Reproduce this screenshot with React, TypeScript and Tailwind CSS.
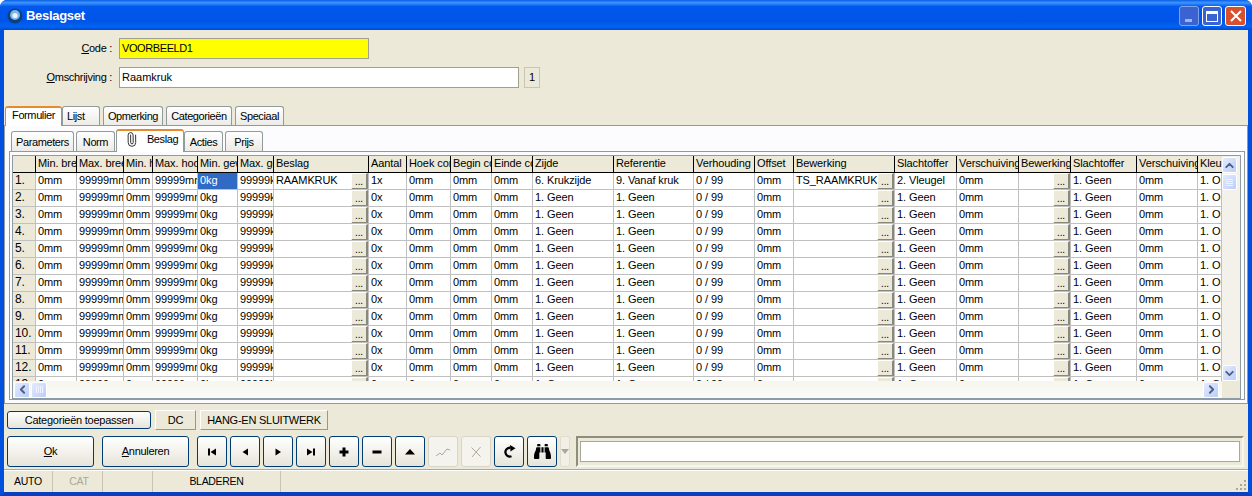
import React from "react";
import { ChevronDown, ChevronLeft, ChevronRight, ChevronUp, Paperclip } from "lucide-react";
import { FaBinoculars } from "react-icons/fa";

const GRID = "grid grid-cols-[23px_41px_47px_29px_45px_40px_36px_95px_38px_44px_41px_41px_81px_80px_61px_39px_101px_62px_62px_52px_66px_61px_24px]";

const headers = ["", "Min. breedte", "Max. breedte", "Min. hoogte", "Max. hoogte", "Min. gewicht", "Max. gewicht", "Beslag", "Aantal", "Hoek correctie", "Begin correctie", "Einde correctie", "Zijde", "Referentie", "Verhouding", "Offset", "Bewerking", "Slachtoffer", "Verschuiving", "Bewerking", "Slachtoffer", "Verschuiving", "Kleur"];

function rowData(n: number): string[] {
  const first = n === 1;
  return [
    `${n}.`, "0mm", "99999mm", "0mm", "99999mm", "0kg", "99999kg",
    first ? "RAAMKRUK" : "", first ? "1x" : "0x", "0mm", "0mm", "0mm",
    first ? "6. Krukzijde" : "1. Geen", first ? "9. Vanaf kruk" : "1. Geen",
    "0 / 99", "0mm", first ? "TS_RAAMKRUK" : "", first ? "2. Vleugel" : "1. Geen",
    "0mm", "", "1. Geen", "0mm", "1. Onbekend",
  ];
}

const rows = Array.from({ length: 13 }, (_, i) => rowData(i + 1));

function Ellipsis() {
  return (
    <span className="absolute right-0 top-0 flex h-[17px] w-[17px] items-end justify-center border-t border-l border-t-white border-l-white border-r-2 border-b-2 border-r-[#8a8878] border-b-[#8a8878] bg-[#ece9d8] pb-[1px] text-[10px] leading-[10px]">
      ...
    </span>
  );
}

function SbBtn({ children, className = "" }: { children: React.ReactNode; className?: string }) {
  return (
    <div className={`flex h-[16px] w-[15px] shrink-0 items-center justify-center rounded-[2px] border border-white bg-linear-to-br from-[#e3ebfe] to-[#bccdf8] text-[#4d6185] ${className}`}>
      {children}
    </div>
  );
}

function Tab({ label, w, active, ml = "", h = "h-[19px]" }: { label: React.ReactNode; w: string; active?: boolean; ml?: string; h?: string }) {
  return active ? (
    <div className={`relative z-10 -mb-px flex ${w} ${ml} h-[20px] items-center justify-center rounded-t-[3px] border-x border-t-2 border-x-[#919b9c] border-t-[#e68b2c] bg-white pb-[3px]`}>
      {label}
    </div>
  ) : (
    <div className={`flex ${w} ${ml} ${h} items-center justify-center rounded-t-[3px] border-x border-t border-[#919b9c] bg-linear-to-b from-white to-[#ecebe6]`}>
      {label}
    </div>
  );
}

function NavBtn({ children, disabled }: { children: React.ReactNode; disabled?: boolean }) {
  return (
    <div className={disabled
      ? "flex h-[31px] w-[30px] items-center justify-center rounded-[3px] border border-[#d8d5c7] bg-[#f4f3ee] text-[#aca899]"
      : "flex h-[31px] w-[30px] items-center justify-center rounded-[3px] border border-[#003c74] bg-linear-to-b from-white to-[#e6e4d9] text-black"}>
      {children}
    </div>
  );
}

function Ico({ d }: { d: string }) {
  return (
    <svg width="12" height="12" viewBox="0 0 12 12"><path d={d} fill="currentColor" /></svg>
  );
}

export default function App() {
  return (
    <div className="flex h-[496px] w-[1252px] flex-col overflow-hidden rounded-t-[7px] bg-[#0048d8] font-['Liberation_Sans',Arial,sans-serif] text-[11px] text-black">
      {/* Title bar */}
      <div className="flex h-[30px] shrink-0 items-center bg-[linear-gradient(180deg,#0a5fe6_0%,#3d95ff_9%,#0058ee_22%,#0054e6_70%,#0064f2_88%,#0048d0_100%)] pl-[7px] pr-[6px] pt-[2px]">
        <svg width="16" height="16" viewBox="0 0 16 16">
          <circle cx="8" cy="8" r="7.5" fill="#0d3f7c" />
          <circle cx="8" cy="7" r="5" fill="#7fb6e8" />
          <circle cx="8" cy="7.5" r="2.6" fill="#eaf4ff" />
        </svg>
        <span className="ml-[3px] text-[13px] font-bold tracking-[-0.3px] text-white">Beslagset</span>
        <div className="ml-auto flex gap-[3px]">
          <div className="flex h-[20px] w-[20px] items-end rounded-[3px] border border-[#7fa4ec] bg-[#3a62d0] pb-[3px] pl-[5px]">
            <div className="h-[3px] w-[7px] bg-[#9db5ea]" />
          </div>
          <div className="flex h-[20px] w-[20px] items-center justify-center rounded-[3px] border border-white bg-[#3a62d0]">
            <div className="h-[11px] w-[12px] border border-t-[3px] border-white" />
          </div>
          <div className="flex h-[20px] w-[21px] items-center justify-center rounded-[3px] border border-white bg-[#d9502c]">
            <svg width="12" height="12" viewBox="0 0 12 12"><path d="M1 1L11 11M11 1L1 11" stroke="white" strokeWidth="2" /></svg>
          </div>
        </div>
      </div>

      {/* Body */}
      <div className="flex min-h-0 flex-1 flex-col border-x-4 border-b-4 border-x-[#0050e0] border-b-[#0a3fc0] bg-[#ece9d8]">
        {/* Form */}
        <div className="mt-[8px] flex h-[21px] items-center">
          <label className="w-[108px] text-right tracking-[-0.3px]"><span className="underline">C</span>ode :</label>
          <div className="ml-[7px] flex h-[21px] w-[250px] items-center border border-[#a0a090] bg-[#ffff00] pl-[2px] tracking-[-0.4px]">VOORBEELD1</div>
        </div>
        <div className="mt-[8px] flex h-[21px] items-center">
          <label className="w-[108px] text-right tracking-[-0.3px]"><span className="underline">O</span>mschrijving :</label>
          <div className="ml-[7px] flex h-[21px] w-[400px] items-center border border-[#a0a090] bg-white pl-[2px]">Raamkruk</div>
          <div className="ml-[5px] flex h-[21px] w-[16px] items-center justify-center border border-[#c8c5b4]">1</div>
        </div>

        {/* Outer tabs */}
        <div className="mt-[18px] flex items-end pl-[1px] tracking-[-0.4px]">
          <Tab label="Formulier" w="w-[57px]" active />
          <Tab label="Lijst" w="w-[38px]" ml="justify-start! pl-[4px] pt-[1px]" />
          <Tab label="Opmerking" w="w-[60px]" ml="ml-[3px] pt-[1px]" />
          <Tab label="Categorieën" w="w-[66px]" ml="ml-[3px] pt-[1px]" />
          <Tab label="Speciaal" w="w-[49px]" ml="ml-[3px] pt-[1px]" />
        </div>
        <div className="flex h-[279px] flex-col border border-[#919b9c] bg-[#fcfcfe] pl-[4px] pr-[2px]">
          {/* Inner tabs */}
          <div className="mt-[3px] flex items-end pl-[2px] tracking-[-0.4px]">
            <Tab label="Parameters" w="w-[63px]" h="h-[20px]" ml="pt-[1px]" />
            <Tab label="Norm" w="w-[39px]" ml="ml-[2px] pt-[1px]" h="h-[20px]" />
            <div className="relative z-10 -mb-px ml-[1px] flex h-[23px] w-[68px] items-center justify-center gap-[8px] rounded-t-[3px] border-x border-t-2 border-x-[#919b9c] border-t-[#e68b2c] bg-white pb-[4px] pl-[2px]">
              <Paperclip size={15} strokeWidth={1.4} className="-rotate-45 text-[#222]" />
              <span>Beslag</span>
            </div>
            <Tab label="Acties" w="w-[39px]" h="h-[20px]" ml="pt-[1px]" />
            <Tab label="Prijs" w="w-[38px]" ml="ml-[2px] pt-[1px]" h="h-[20px]" />
          </div>
          {/* Inner panel */}
          <div className="flex h-[249px] flex-col border border-[#919b9c] bg-[#fcfcfe] pl-[2px] pr-[3px] pt-[3px]">
            {/* Grid frame */}
            <div className="flex h-[244px] flex-col border border-[#8d9ba5] bg-white tracking-[-0.1px]">
              <div className="flex min-h-0 flex-1">
                <div className="min-w-0 flex-1 overflow-hidden">
                  <div className={`${GRID} h-[17px] border-b border-b-black`}>
                    {headers.map((h, i) => (
                      <div key={i} className="overflow-hidden whitespace-nowrap border-r border-r-black bg-[#ece9d8] pl-[2px] leading-[15px] last:border-r-0">
                        {h}
                      </div>
                    ))}
                  </div>
                  {rows.map((r, ri) => (
                    <div key={ri} className={`${GRID} h-[17px]`}>
                      {r.map((c, ci) => (
                        <div
                          key={ci}
                          className={
                            "relative overflow-hidden whitespace-nowrap border-b border-r border-[#c0c0c0] pl-[2px] leading-[15px] " +
                            (ci === 0 ? "bg-[#ece9d8] text-[12px]" : ri === 0 && ci === 5 ? "bg-[#316ac5] text-white" : "bg-white")
                          }
                        >
                          {c}
                          {(ci === 7 || ci === 16 || ci === 19) && <Ellipsis />}
                        </div>
                      ))}
                    </div>
                  ))}
                </div>
                {/* Vertical scrollbar */}
                <div className="flex w-[18px] shrink-0 flex-col items-start bg-[#f3f1ea] pt-[1px]">
                  <SbBtn><ChevronUp size={13} strokeWidth={3.5} /></SbBtn>
                  <SbBtn className="mt-[1px]">
                    <div className="flex flex-col gap-[1px]"><div className="h-px w-[7px] bg-[#eef3ff]" /><div className="h-px w-[7px] bg-[#eef3ff]" /><div className="h-px w-[7px] bg-[#eef3ff]" /><div className="h-px w-[7px] bg-[#eef3ff]" /></div>
                  </SbBtn>
                  <SbBtn className="mt-auto"><ChevronDown size={13} strokeWidth={3.5} /></SbBtn>
                </div>
              </div>
              {/* Horizontal scrollbar */}
              <div className="flex h-[17px] shrink-0">
                <div className="flex min-w-0 flex-1 items-center bg-linear-to-b from-[#f6f5ef] to-[#fbfbf8] pl-[1px] pr-[3px]">
                  <SbBtn className="w-[16px]"><ChevronLeft size={13} strokeWidth={3.5} /></SbBtn>
                  <SbBtn className="ml-[1px] w-[16px]">
                    <div className="flex gap-[1px]"><div className="h-[7px] w-px bg-[#eef3ff]" /><div className="h-[7px] w-px bg-[#eef3ff]" /><div className="h-[7px] w-px bg-[#eef3ff]" /><div className="h-[7px] w-px bg-[#eef3ff]" /></div>
                  </SbBtn>
                  <SbBtn className="ml-auto w-[16px]"><ChevronRight size={13} strokeWidth={3.5} /></SbBtn>
                </div>
                <div className="w-[18px] shrink-0 bg-[#ece9d8]" />
              </div>
            </div>
          </div>
        </div>

        {/* Toolbar row 1 */}
        <div className="mt-[6px] flex h-[20px] items-center pl-[3px] tracking-[-0.25px]">
          <div className="flex h-[18px] w-[144px] items-center justify-center rounded-[3px] border border-[#003c74] bg-linear-to-b from-white to-[#e6e4d9]">Categorieën toepassen</div>
          <div className="ml-[4px] flex h-[20px] w-[41px] items-center justify-center border border-t-white border-l-white border-r-[#9a9888] border-b-[#9a9888]">DC</div>
          <div className="ml-[4px] flex h-[20px] w-[128px] items-center justify-center whitespace-nowrap border border-t-white border-l-white border-r-[#9a9888] border-b-[#9a9888]">HANG-EN SLUITWERK</div>
        </div>

        {/* Toolbar row 2 */}
        <div className="mt-[6px] flex h-[31px] items-center pl-[3px] tracking-[-0.3px]">
          <div className="flex h-[31px] w-[87px] items-center justify-center rounded-[3px] border border-[#003c74] bg-linear-to-b from-white to-[#e6e4d9]"><span><span className="underline">O</span>k</span></div>
          <div className="ml-[8px] flex h-[31px] w-[87px] items-center justify-center rounded-[3px] border border-[#003c74] bg-linear-to-b from-white to-[#e6e4d9]"><span><span className="underline">A</span>nnuleren</span></div>
          <div className="ml-[8px] flex gap-[3px]">
            <NavBtn><Ico d="M2 2.5H4V9.5H2ZM10 2.5V9.5L4.5 6Z" /></NavBtn>
            <NavBtn><Ico d="M9 2.5V9.5L3.5 6Z" /></NavBtn>
            <NavBtn><Ico d="M3.5 2.5V9.5L9 6Z" /></NavBtn>
            <NavBtn><Ico d="M2 2.5V9.5L7.5 6ZM8 2.5H10V9.5H8Z" /></NavBtn>
            <NavBtn><Ico d="M4.5 1.5H7.5V4.5H10.5V7.5H7.5V10.5H4.5V7.5H1.5V4.5H4.5Z" /></NavBtn>
            <NavBtn><Ico d="M1.5 4.5H10.5V7.5H1.5Z" /></NavBtn>
            <NavBtn><Ico d="M6 3L11 8.5H1Z" /></NavBtn>
            <NavBtn disabled>
              <svg width="16" height="12" viewBox="0 0 16 12" fill="none"><path d="M1 10L5 7L7 9L12 3L15 4" stroke="currentColor" /></svg>
            </NavBtn>
            <NavBtn disabled>
              <svg width="12" height="12" viewBox="0 0 12 12" fill="none"><path d="M1.5 1.5L10.5 10.5M10.5 1L2 11" stroke="currentColor" /></svg>
            </NavBtn>
            <NavBtn>
              <svg width="13" height="13" viewBox="0 0 13 13" fill="none">
                <path d="M8.5 11.2A4.4 4.4 0 1 1 7.5 2.8" stroke="currentColor" strokeWidth="2.3" />
                <path d="M7 0L12.5 3.2L7.5 6.5Z" fill="currentColor" />
              </svg>
            </NavBtn>
            <NavBtn><FaBinoculars size={17} /></NavBtn>
          </div>
          <div className="ml-[3px] flex h-[31px] w-[10px] items-center justify-center rounded-[2px] border border-[#e0ddd0] bg-[#f1efe6]">
            <div className="h-0 w-0 border-x-[4px] border-t-[5px] border-x-transparent border-t-[#aca899]" />
          </div>
          <div className="ml-[6px] flex h-[31px] w-[668px] items-center border-2 border-t-[#8f8d7d] border-l-[#8f8d7d] border-r-[#f7f6f0] border-b-[#f7f6f0] px-[2px]">
            <div className="h-[21px] w-full border border-[#a8a898] bg-white" />
          </div>
        </div>

        {/* Separator */}
        <div className="mt-[2px] h-[2px] border-t border-t-[#aca899] border-b border-b-white" />

        {/* Status bar */}
        <div className="flex min-h-0 flex-1 items-center text-[10.5px] tracking-[-0.3px]">
          <div className="flex h-full w-[49px] items-center justify-center border-r border-r-[#c8c5b4]">AUTO</div>
          <div className="flex h-full w-[50px] items-center justify-center border-r border-r-[#c8c5b4] pl-[3px] text-[#aca899]">CAT</div>
          <div className="h-full w-[50px] border-r border-r-[#c8c5b4]" />
          <div className="flex h-full w-[128px] items-center justify-center border-r border-r-[#c8c5b4]">BLADEREN</div>
          <div className="relative h-full flex-1">
            <svg className="absolute bottom-[1px] right-[1px]" width="12" height="12" viewBox="0 0 12 12" fill="#aca899">
              <rect x="9" y="1" width="2" height="2" /><rect x="5" y="5" width="2" height="2" /><rect x="9" y="5" width="2" height="2" /><rect x="1" y="9" width="2" height="2" /><rect x="5" y="9" width="2" height="2" /><rect x="9" y="9" width="2" height="2" />
            </svg>
          </div>
        </div>
      </div>
    </div>
  );
}
